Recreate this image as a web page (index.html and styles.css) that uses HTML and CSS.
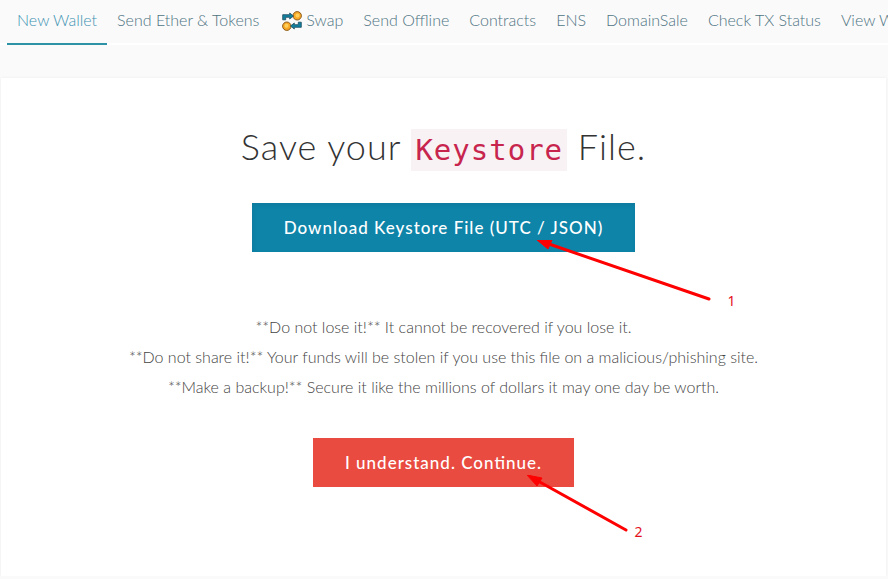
FILE: index.html
```html
<!DOCTYPE html>
<html lang="en">
<head>
    <meta charset="UTF-8">
    <meta name="viewport" content="width=device-width, initial-scale=1.0">
    <title>New Wallet</title>
    <link rel="stylesheet" href="styles.css">
</head>
<body>
    <nav class="nav">
        <ul class="nav-list">
            <li><a class="nav-link active" href="#new">New Wallet</a></li>
            <li><a class="nav-link" href="#send">Send Ether &amp; Tokens</a></li>
            <li>
                <a class="nav-link" href="#swap">
                    <svg class="swap-icon" viewBox="0 0 20 20" aria-hidden="true">
                        <circle cx="15.200" cy="4.800" r="4.200" fill="#f9a825" stroke="#8a5a1e" stroke-width="1"/>
                        <circle cx="15.500" cy="4.500" r="2" fill="#ffd05c"/>
                        <path d="M.7 8.800V3.700h7V2L11.500 5 7.700 8V6.300H3.700v2.500z" fill="#12809f" stroke="#1a4a5e" stroke-width=".8"/>
                        <circle cx="4.800" cy="15.200" r="4.200" fill="#f9a825" stroke="#8a5a1e" stroke-width="1"/>
                        <circle cx="4.500" cy="14.800" r="2" fill="#ffd05c"/>
                        <path d="M19.300 11.200v5.100h-7V18L8.500 15l3.800-3v1.700h4v-2.500z" fill="#12809f" stroke="#1a4a5e" stroke-width=".8"/>
                    </svg>
                    Swap
                </a>
            </li>
            <li><a class="nav-link" href="#offline">Send Offline</a></li>
            <li><a class="nav-link" href="#contracts">Contracts</a></li>
            <li><a class="nav-link" href="#ens">ENS</a></li>
            <li><a class="nav-link" href="#domainsale">DomainSale</a></li>
            <li><a class="nav-link" href="#status">Check TX Status</a></li>
            <li><a class="nav-link" href="#view">View Wallet Info</a></li>
        </ul>
    </nav>

    <main class="panel">
        <h1 class="title">Save your <code>Keystore</code> File.</h1>
        <div class="step">
            <button class="btn btn-primary" type="button">Download Keystore File (UTC / JSON)</button>
            <svg class="arrow arrow-one" viewBox="0 0 176 62" aria-hidden="true">
                <path d="M12 4L172 59" />
                <polygon points="0,0 15,0 11,9" />
            </svg>
            <span class="mark mark-one">1</span>
        </div>
        <div class="warning">
            <p>**Do not lose it!** It cannot be recovered if you lose it.</p>
            <p>**Do not share it!** Your funds will be stolen if you use this file on a malicious/phishing site.</p>
            <p>**Make a backup!** Secure it like the millions of dollars it may one day be worth.</p>
        </div>
        <div class="step">
            <button class="btn btn-danger" type="button">I understand. Continue.</button>
            <svg class="arrow arrow-two" viewBox="0 0 104 58" aria-hidden="true">
                <path d="M11 6L99 55" />
                <polygon points="0,0 15,3 10,11" />
            </svg>
            <span class="mark mark-two">2</span>
        </div>
    </main>
</body>
</html>
```

FILE: styles.css
```css
* {
    box-sizing: border-box;
}
body {
    margin: 0;
    background: #fafafa;
    color: #444;
    font-family: Lato, "Open Sans", sans-serif;
    font-size: 16px;
    font-weight: 300;
    line-height: 30px;
    overflow-x: hidden;
}
.nav {
    overflow: hidden;
    padding-left: 7px;
    box-shadow: inset 0 -2px #fff;
}
.nav-list {
    display: flex;
    margin: 0;
    padding: 0;
    list-style: none;
    white-space: nowrap;
}
.nav-link {
    display: flex;
    align-items: center;
    gap: 4px;
    height: 45px;
    padding: 0 10px 4px;
    border-bottom: 2px solid transparent;
    color: #4e7482;
    text-decoration: none;
}
.nav-link.active {
    border-color: #2e92a6;
    color: #3d93b3;
}
.swap-icon {
    width: 20px;
    height: 22px;
    margin: 2px 0 0 3px;
}
.panel {
    margin: 33px 2px 0 1px;
    padding: 40px 16px 89px;
    background: #fff;
    box-shadow: 0 3px #ebebeb, 0 0 3px rgba(0, 0, 0, 0.06);
    text-align: center;
}
.title {
    margin: 0 0 28px;
    color: #333;
    font-size: 36px;
    font-weight: 300;
    line-height: 57px;
    letter-spacing: 1px;
}
.title code {
    padding: 4px;
    background: #f9f2f4;
    color: #c7254e;
    font-family: "DejaVu Sans Mono", monospace;
    font-size: 29px;
    font-weight: 400;
    line-height: 1;
}
.step {
    position: relative;
}
.btn {
    display: block;
    margin: 0 auto;
    padding: 0 32px;
    border: 0;
    color: #fff;
    font-family: inherit;
    font-feature-settings: "liga";
    font-size: 17px;
    font-weight: 500;
    line-height: 49px;
    letter-spacing: 1px;
    cursor: pointer;
}
.btn-primary {
    background: #0e84a9;
    box-shadow: inset 1px 2px 5px rgba(0, 0, 0, 0.08);
}
.btn-danger {
    background: #e94b41;
}
.warning {
    margin: 60px 0 36px;
}
.warning p {
    margin: 0;
}
/* numbered pointers over the buttons */
.arrow {
    position: absolute;
    fill: #f00;
    stroke: #f00;
    pointer-events: none;
}
.arrow path {
    stroke-width: 3;
    stroke-linecap: round;
}
.arrow-one {
    top: 37px;
    left: calc(50% + 93px);
    width: 176px;
    height: 62px;
}
.arrow-two {
    top: 37px;
    left: calc(50% + 83px);
    width: 104px;
    height: 58px;
}
.mark {
    position: absolute;
    color: #e3101c;
    font-family: "Noto Sans", sans-serif;
    font-size: 14px;
    font-weight: 400;
    line-height: 20px;
}
.mark-one {
    top: 88px;
    left: calc(50% + 284px);
}
.mark-two {
    top: 84px;
    left: calc(50% + 191px);
}
```
